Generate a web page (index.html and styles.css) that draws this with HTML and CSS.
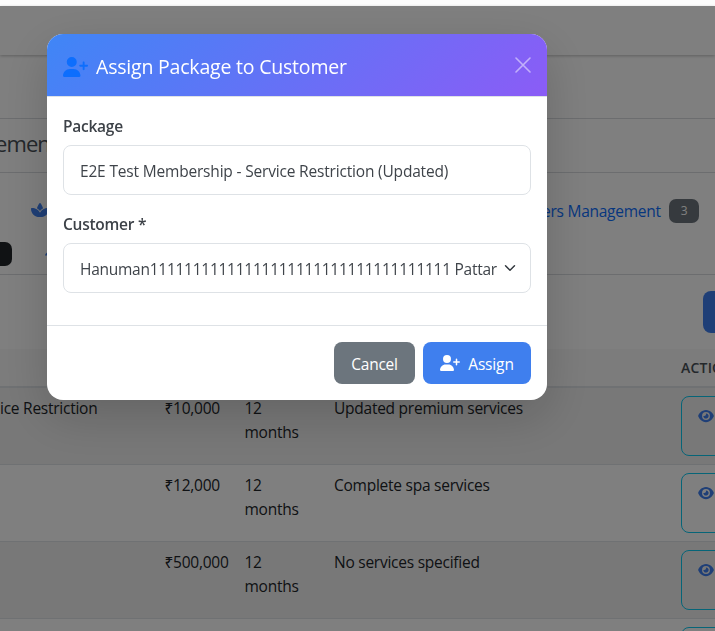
FILE: index.html
```
<!DOCTYPE html>
<html lang="en">
<head>
<meta charset="utf-8">
<title>Assign Package to Customer</title>
<link rel="stylesheet" href="styles.css">
</head>
<body>
<svg class="defs" width="0" height="0">
  <symbol id="user-plus" viewBox="0 0 640 512"><path d="M96 128a128 128 0 1 1 256 0A128 128 0 1 1 96 128zM0 482.3C0 383.8 79.8 304 178.3 304h91.4C368.2 304 448 383.8 448 482.3c0 16.4-13.3 29.7-29.7 29.7H29.7C13.3 512 0 498.7 0 482.3zM504 312V248H440c-13.3 0-24-10.7-24-24s10.7-24 24-24h64V136c0-13.3 10.7-24 24-24s24 10.7 24 24v64h64c13.3 0 24 10.7 24 24s-10.7 24-24 24H552v64c0 13.3-10.7 24-24 24s-24-10.7-24-24z"/></symbol>
  <symbol id="eye" viewBox="0 0 576 512"><path d="M288 32c-80.8 0-145.5 36.8-192.6 80.6C48.6 156 17.3 208 2.5 243.7c-3.3 7.9-3.3 16.7 0 24.6C17.3 304 48.6 356 95.4 399.4C142.5 443.2 207.2 480 288 480s145.5-36.8 192.6-80.6c46.8-43.5 78.1-95.4 93-131.1c3.3-7.9 3.3-16.7 0-24.6c-14.9-35.7-46.2-87.7-93-131.1C433.5 68.8 368.8 32 288 32zM144 256a144 144 0 1 1 288 0 144 144 0 1 1 -288 0zm144-64c0 35.3-28.7 64-64 64c-7.1 0-13.9-1.2-20.3-3.3c-5.5-1.8-11.9 1.6-11.7 7.4c.3 6.9 1.3 13.8 3.2 20.7c13.7 51.2 66.4 81.6 117.6 67.9s81.6-66.4 67.9-117.6c-11.1-41.5-47.8-69.4-88.6-71.1c-5.8-.2-9.2 6.1-7.4 11.7c2.1 6.4 3.3 13.2 3.3 20.3z"/></symbol>
  <symbol id="spa" viewBox="0 0 576 512"><path d="M183.1 235.3c33.7 20.7 62.9 48.1 85.8 80.5c7 9.9 13.4 20.3 19.1 31c5.7-10.8 12.1-21.1 19.1-31c22.9-32.4 52.1-59.8 85.8-80.5C437.6 207.8 490.1 192 546 192h9.9c11.1 0 20.1 9 20.1 20.1C576 360.1 456.1 480 308.1 480H288 267.9C119.9 480 0 360.1 0 212.1C0 201 9 192 20.1 192H30c55.9 0 108.4 15.8 153.1 43.3zM301.5 37.6c15.7 16.9 61.1 71.8 84.4 164.6c-38 21.6-71.4 50.8-97.9 85.6c-26.5-34.8-59.9-63.9-97.9-85.6c23.2-92.8 68.6-147.7 84.4-164.6C278 33.9 282.9 32 288 32s9.8 1.9 13.5 5.6z"/></symbol>
</svg>
<div class="page">
  <div class="topbar"></div>
  <div class="subbar"></div>
  <div class="heading">ement</div>
  <div class="tabs">
    <div class="tab-row">
      <svg class="icon tab-icon"><use href="#spa"/></svg>
      <span class="tab-link">ers Management</span>
      <span class="badge">3</span>
    </div>
    <div class="tab-row second">
      <span class="badge dark"></span>
      <svg class="icon dot" viewBox="0 0 10 10"><path d="M0 6.5Q0 5 3 2.5V6.5z"/></svg>
    </div>
  </div>
  <div class="toolbar"><span class="add"></span></div>
  <div class="row thead"><span></span><span></span><span></span><span></span><span class="th">ACTIONS</span></div>
  <div class="row odd"><span class="name">ice Restriction</span><span>₹10,000</span><span>12<br>months</span><span>Updated premium services</span><span class="view"><svg class="icon eye"><use href="#eye"/></svg></span></div>
  <div class="row"><span></span><span>₹12,000</span><span>12<br>months</span><span>Complete spa services</span><span class="view"><svg class="icon eye"><use href="#eye"/></svg></span></div>
  <div class="row odd"><span></span><span>₹500,000</span><span>12<br>months</span><span>No services specified</span><span class="view"><svg class="icon eye"><use href="#eye"/></svg></span></div>
  <div class="row"><span></span><span></span><span></span><span></span><span class="view"></span></div>
</div>
<div class="backdrop">
  <div class="modal">
    <div class="modal-header">
      <svg class="icon title-icon"><use href="#user-plus"/></svg>
      <span class="title">Assign Package to Customer</span>
      <svg class="close" viewBox="0 0 16 16"><path d="M1 1L15 15M15 1L1 15"/></svg>
    </div>
    <div class="modal-body">
      <div class="label">Package</div>
      <div class="field"><span class="package">E2E Test Membership - Service Restriction (Updated)</span></div>
      <div class="label">Customer *</div>
      <div class="field"><span class="customer">Hanuman11111111111111111111111111111111111 Pattar</span><svg class="chevron" viewBox="0 0 16 16"><path d="m2 5 6 6 6-6"/></svg></div>
    </div>
    <div class="modal-footer">
      <div class="btn cancel">Cancel</div>
      <div class="btn assign"><svg class="icon btn-icon"><use href="#user-plus"/></svg><span>Assign</span></div>
    </div>
  </div>
</div>
</body>
</html>
```
FILE: styles.css
```
* { box-sizing: border-box; }
body {
  margin: 0;
  height: 631px;
  overflow: hidden;
  background: #fcfcfc;
  color: #212529;
  font: 15.5px/24px "Open Sans", "Noto Sans", sans-serif;
  letter-spacing: -.25px;
}
.defs { position: absolute; }
.icon { fill: currentColor; flex: none; }
.page { height: 631px; overflow: hidden; padding-top: 6px; display: flex; flex-direction: column; background: linear-gradient(#fcfcfc 6px, #fff 6px); }
.page > div { flex: none; }
.topbar { height: 49px; box-shadow: 0 1px 3px rgba(0,0,0,.25); }
.subbar { height: 64px; border-bottom: 1px solid #d8dbdf; }
.heading { height: 54px; border-bottom: 1px solid #d8dbdf; font-size: 22px; line-height: 48px; text-indent: -5px; letter-spacing: -.9px; white-space: nowrap; color: #495057; }
.tabs { height: 102px; border-bottom: 1px solid #d8dbdf; padding-top: 26px; }
.tab-row { display: flex; align-items: center; height: 24px; color: #0d6efd; }
.tab-row.second { margin-top: 19px; }
.tab-icon { width: 18px; height: 16px; margin: -2px 0 0 31px; color: #3f7fee; }
.tab-link { margin: 0 0 0 493px; width: 119px; white-space: nowrap; }
.badge { width: 30px; height: 24px; margin-left: 8px; border-radius: 7px; background: #6c757d; color: #fff; font-size: 12px; text-align: center; }
.badge.dark { width: 32px; margin-left: -20px; background: #212529; }
.dot { width: 10px; height: 10px; margin-left: 33px; color: #3f7fee; }
.toolbar { height: 74px; padding-top: 16px; display: flex; justify-content: flex-end; overflow: hidden; }
.add { width: 30px; height: 42px; margin-right: -18px; flex: none; border-radius: 8px; background: #3f7fee; }
.row { display: grid; grid-template-columns: 164.5px 80px 89.5px 347px 100px; height: 77px; padding-top: 8px; border-bottom: 1px solid #dee2e6; white-space: nowrap; }
.row.odd { background: #f1f1f1; }
.row.thead { height: 39px; padding-top: 7px; background: #f8f8f8; border-bottom: 2px solid #dee2e6; }
.th { font-size: 14px; font-weight: 600; letter-spacing: .2px; color: #495057; }
.view { height: 60px; border: 1px solid #0dcaf0; border-radius: 8px; padding: 12px 0 0 16px; color: #3f7fee; }
.eye { display: block; width: 16px; height: 14px; }
.backdrop { position: fixed; inset: 6px 0 0; background: rgba(0,0,0,.5); padding: 28px 0 0 47px; }
.modal { width: 500px; height: 366px; border-radius: 16px; overflow: hidden; background: #fff; box-shadow: 0 16px 48px rgba(0,0,0,.175); color: #343a40; }
.modal-header { height: 63px; padding: 0 16px; display: flex; align-items: center; border-bottom: 1px solid #dee2e6; background: linear-gradient(135deg, #3f86f6, #8b5cf6); color: #fff; }
.title-icon { width: 25px; height: 20px; color: #0d6efd; margin-top: 3px; }
.title { margin-left: 8px; font-size: 19.5px; letter-spacing: -.2px; white-space: nowrap; margin-top: 4px; }
.close { width: 16px; height: 16px; margin-left: auto; stroke: #fff; stroke-width: 1.6; stroke-linecap: round; fill: none; opacity: .5; }
.modal-body { height: 228px; padding: 18px 16px 0; }
.label { height: 24px; line-height: 23px; font-weight: 600; color: #3d4248; }
.field { height: 50px; margin: 6px 0 18px; padding: 2px 14px 0 16px; border: 1px solid #dee2e6; border-radius: 8px; display: flex; align-items: center; justify-content: space-between; white-space: nowrap; color: #3f444a; }
.package { letter-spacing: -.18px; }
.customer { letter-spacing: -.26px; }
.chevron { width: 12px; height: 12px; fill: none; stroke: #343a40; stroke-width: 2; stroke-linecap: round; stroke-linejoin: round; margin-top: -3px; }
.modal-footer { height: 75px; border-top: 1px solid #dee2e6; padding: 16px; display: flex; justify-content: flex-end; gap: 8px; }
.btn { height: 42px; border-radius: 8px; display: flex; align-items: center; justify-content: center; color: #fff; padding-top: 2px; }
.cancel { width: 81px; background: #6c757d; }
.assign { width: 108px; gap: 8px; background: #3f7fee; letter-spacing: -.15px; }
.btn-icon { width: 20px; height: 16px; margin-top: -2px; }
```
